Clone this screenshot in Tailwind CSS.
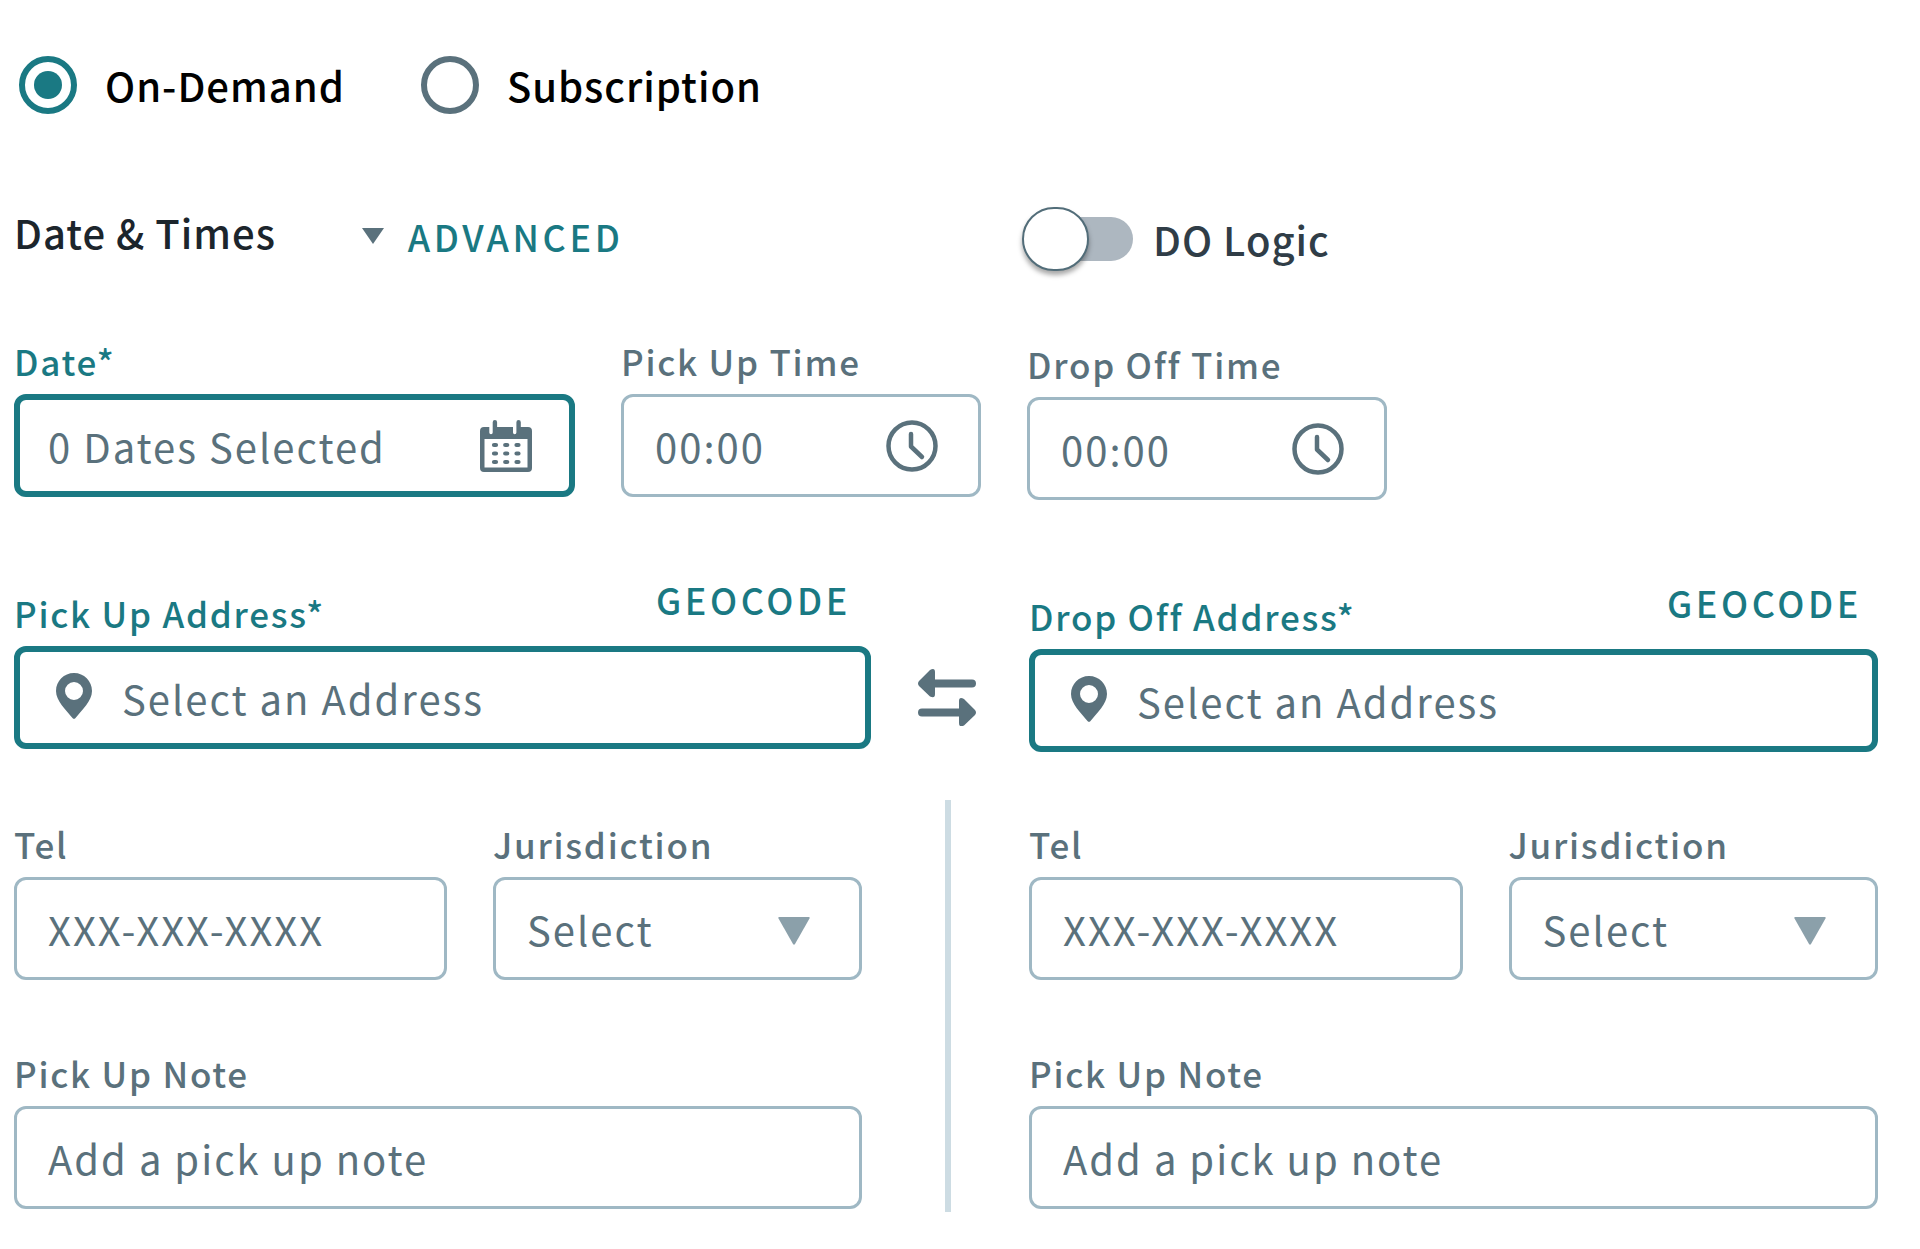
<!DOCTYPE html>
<html lang="en">
<head>
    <meta charset="UTF-8">
    <meta name="viewport" content="width=device-width, initial-scale=1.0">
    <title>Trip Booking</title>
    <script src="https://cdn.jsdelivr.net/npm/@tailwindcss/browser@4"></script>
</head>
<body class="bg-white min-h-screen font-['Noto_Sans_CJK_SC',sans-serif] text-[#5a717c]">
    <form class="pl-[14px] pr-[42px] pt-14 pb-9">

        <!-- Trip type -->
        <div class="flex items-center gap-19 pl-[5px] text-black text-[40px] leading-[56px] font-medium tracking-wide">
            <label class="flex items-center gap-7">
                <input type="radio" name="tripType" checked class="appearance-none size-[58px] rounded-full border-6 border-[#5a717c] checked:border-[#1a7983] grid place-items-center before:size-[28px] before:rounded-full checked:before:bg-[#1a7983]">
                On-Demand
            </label>
            <label class="flex items-center gap-7">
                <input type="radio" name="tripType" class="appearance-none size-[58px] rounded-full border-6 border-[#5a717c] checked:border-[#1a7983] grid place-items-center before:size-[28px] before:rounded-full checked:before:bg-[#1a7983]">
                Subscription
            </label>
        </div>

        <!-- Section header -->
        <div class="mt-[90px] grid grid-cols-[1008fr_856fr] items-start">
            <div class="flex items-start leading-[56px]">
                <h2 class="text-[40px] font-medium tracking-wide text-[#1c252c]">Date &amp; Times</h2>
                <button type="button" class="ml-[86px] pt-1 flex items-center gap-6 text-[36px] font-medium tracking-widest text-[#1a7983]">
                    <svg class="w-[22px] h-4 fill-[#5a717c]" viewBox="0 0 22 16"><path d="M0 0h22L11 16z"/></svg>
                    ADVANCED
                </button>
            </div>
            <label class="pt-[3px] flex items-center gap-5 text-[40px] leading-[56px] font-medium tracking-wide text-[#303d47]">
                <input type="checkbox" role="switch" class="appearance-none relative w-[111px] h-16 before:absolute before:inset-y-[10px] before:left-5 before:right-0 before:rounded-full before:bg-[#adb7c0] after:absolute after:left-0 after:top-0 after:w-[67px] after:h-16 after:rounded-full after:border-2 after:border-[#526d79] after:bg-white after:shadow-[0_4px_5px_rgba(0,0,0,0.35)] checked:after:left-[44px]">
                DO Logic
            </label>
        </div>

        <!-- Date and times -->
        <div class="mt-[66px] grid grid-cols-[561fr_360fr_360fr_445fr] gap-x-[46px] items-start">
            <div class="min-w-0 flex flex-col gap-[9px]">
                <label for="date" class="text-[35px] leading-[48px] font-medium tracking-wider text-[#1a7983]">Date*</label>
                <div class="h-[103px] flex items-center border-6 border-[#1a7983] rounded-xl pl-[28px] pr-[37px]">
                    <input id="date" type="text" placeholder="0 Dates Selected" class="flex-1 min-w-0 h-full text-[40px] tracking-wider outline-none placeholder:text-[#5a717c]">
                    <svg class="w-[52px] h-[52px] shrink-0" viewBox="0 0 52 52">
                        <path fill="#5a717c" fill-rule="evenodd" d="M4 7H9.300V12.500a1.700 1.700 0 0 0 3.400 0V2.200a2.200 2.200 0 0 1 4.400 0V7H33V12.500a1.700 1.700 0 0 0 3.400 0V2.200a2.200 2.200 0 0 1 4.400 0V7H48a4 4 0 0 1 4 4V48a4 4 0 0 1-4 4H4a4 4 0 0 1-4-4V11a4 4 0 0 1 4-4zM4.500 19V47.500H47.500V19z"/>
                        <path stroke="#5a717c" stroke-width="4.200" stroke-linecap="round" d="M14 25h2M25.200 25h2M36.500 25h2M14 33.500h2M25.200 33.500h2M36.500 33.500h2M14 42h2M25.200 42h2M36.500 42h2"/>
                    </svg>
                </div>
            </div>
            <div class="min-w-0 flex flex-col gap-[9px]">
                <label for="pickUpTime" class="text-[35px] leading-[48px] font-medium tracking-wider">Pick Up Time</label>
                <div class="h-[103px] flex items-center border-3 border-[#9fb8c4] rounded-xl pl-[31px] pr-[40px]">
                    <input id="pickUpTime" type="text" placeholder="00:00" class="flex-1 min-w-0 h-full text-[40px] tracking-wider outline-none placeholder:text-[#5a717c]">
                    <svg class="w-[52px] h-[52px] shrink-0" viewBox="0 0 52 52" fill="none" stroke="#5a717c" stroke-linecap="round" stroke-linejoin="round">
                        <circle cx="26" cy="26" r="23.500" stroke-width="4.500"/>
                        <path stroke-width="4.500" d="M25 14V26.500L36 37"/>
                    </svg>
                </div>
            </div>
            <div class="min-w-0 flex flex-col gap-[9px] pt-[3px]">
                <label for="dropOffTime" class="text-[35px] leading-[48px] font-medium tracking-wider">Drop Off Time</label>
                <div class="h-[103px] flex items-center border-3 border-[#9fb8c4] rounded-xl pl-[31px] pr-[40px]">
                    <input id="dropOffTime" type="text" placeholder="00:00" class="flex-1 min-w-0 h-full text-[40px] tracking-wider outline-none placeholder:text-[#5a717c]">
                    <svg class="w-[52px] h-[52px] shrink-0" viewBox="0 0 52 52" fill="none" stroke="#5a717c" stroke-linecap="round" stroke-linejoin="round">
                        <circle cx="26" cy="26" r="23.500" stroke-width="4.500"/>
                        <path stroke-width="4.500" d="M25 14V26.500L36 37"/>
                    </svg>
                </div>
            </div>
        </div>

        <!-- Addresses -->
        <div class="mt-[75px] grid grid-cols-[857fr_158fr_849fr] items-start">
            <div class="min-w-0 flex flex-col gap-[9px]">
                <div class="h-[62px] flex justify-between leading-[48px] font-medium text-[#1a7983]">
                    <label for="pickUpAddress" class="self-end text-[35px] tracking-wider">Pick Up Address*</label>
                    <button type="button" class="self-start mr-5 text-[36px] tracking-widest">GEOCODE</button>
                </div>
                <div class="h-[103px] flex items-center gap-[30px] border-6 border-[#1a7983] rounded-xl pl-9 pr-6">
                    <svg class="w-9 h-[46px] mb-1 shrink-0 fill-[#5a717c]" viewBox="0 0 36 46"><path fill-rule="evenodd" d="M18 0C28 0 36 8 36 18C36 28 26 37 19.500 45Q18 46.700 16.500 45C10 37 0 28 0 18C0 8 8 0 18 0zM18 9a9 9 0 1 0 0 18a9 9 0 1 0 0-18z"/></svg>
                    <input id="pickUpAddress" type="text" placeholder="Select an Address" class="flex-1 min-w-0 h-full text-[40px] tracking-wider outline-none placeholder:text-[#5a717c]">
                </div>
            </div>
            <button type="button" aria-label="Swap addresses" class="self-end justify-self-center pr-[6px] pb-[26px]">
                <svg class="w-[58px] h-[57px] fill-[#5a717c]" viewBox="0 0 58 57">
                    <path d="M1 12L12 1Q17-1.500 17 3V10.500H54a4 4 0 0 1 0 8H17V25Q17 30 12 27.500L1 17Q-1 14.500 1 12z"/>
                    <path d="M57 41L46 30Q41 27.500 41 32V39.500H4a4 4 0 0 0 0 8H41V54Q41 59 46 56.500L57 46Q59 43.500 57 41z"/>
                </svg>
            </button>
            <div class="min-w-0 flex flex-col gap-[9px] pt-[3px]">
                <div class="h-[62px] flex justify-between leading-[48px] font-medium text-[#1a7983]">
                    <label for="dropOffAddress" class="self-end text-[35px] tracking-wider">Drop Off Address*</label>
                    <button type="button" class="self-start mr-4 text-[36px] tracking-widest">GEOCODE</button>
                </div>
                <div class="h-[103px] flex items-center gap-[30px] border-6 border-[#1a7983] rounded-xl pl-9 pr-6">
                    <svg class="w-9 h-[46px] mb-1 shrink-0 fill-[#5a717c]" viewBox="0 0 36 46"><path fill-rule="evenodd" d="M18 0C28 0 36 8 36 18C36 28 26 37 19.500 45Q18 46.700 16.500 45C10 37 0 28 0 18C0 8 8 0 18 0zM18 9a9 9 0 1 0 0 18a9 9 0 1 0 0-18z"/></svg>
                    <input id="dropOffAddress" type="text" placeholder="Select an Address" class="flex-1 min-w-0 h-full text-[40px] tracking-wider outline-none placeholder:text-[#5a717c]">
                </div>
            </div>
        </div>

        <!-- Contact details and notes -->
        <div class="mt-12 grid grid-cols-[848fr_167fr_849fr]">
            <div class="min-w-0 pt-5 pb-[3px] flex flex-col gap-[69px]">
                <div class="grid grid-cols-[433fr_369fr] gap-x-[46px]">
                    <div class="min-w-0 flex flex-col gap-[9px]">
                        <label for="pickUpTel" class="text-[35px] leading-[48px] font-medium tracking-wider">Tel</label>
                        <input id="pickUpTel" type="tel" placeholder="XXX-XXX-XXXX" class="w-full h-[103px] border-3 border-[#9fb8c4] rounded-xl px-[31px] text-[40px] tracking-wider placeholder:text-[#5a717c]">
                    </div>
                    <div class="min-w-0 flex flex-col gap-[9px]">
                        <label for="pickUpJurisdiction" class="text-[35px] leading-[48px] font-medium tracking-wider">Jurisdiction</label>
                        <div class="relative">
                            <select id="pickUpJurisdiction" class="appearance-none w-full h-[103px] border-3 border-[#9fb8c4] rounded-xl px-[31px] text-[40px] tracking-wider">
                                <option>Select</option>
                            </select>
                            <svg class="absolute right-[52px] top-10 w-8 h-7 pointer-events-none fill-[#8ba0aa]" viewBox="0 0 32 28"><path d="M1 0H31Q32 0 31.500 1.500L17 27Q16 28.500 15 27L.5 1.500Q0 0 1 0z"/></svg>
                        </div>
                    </div>
                </div>
                <div class="flex flex-col gap-[9px]">
                    <label for="pickUpNote" class="text-[35px] leading-[48px] font-medium tracking-wider">Pick Up Note</label>
                    <input id="pickUpNote" type="text" placeholder="Add a pick up note" class="w-full h-[103px] border-3 border-[#9fb8c4] rounded-xl px-[31px] text-[40px] tracking-wider placeholder:text-[#5a717c]">
                </div>
            </div>
            <div class="flex justify-center pl-1">
                <div class="w-[6px] bg-[#cddce3]"></div>
            </div>
            <div class="min-w-0 pt-5 pb-[3px] flex flex-col gap-[69px]">
                <div class="grid grid-cols-[433fr_369fr] gap-x-[46px]">
                    <div class="min-w-0 flex flex-col gap-[9px]">
                        <label for="dropOffTel" class="text-[35px] leading-[48px] font-medium tracking-wider">Tel</label>
                        <input id="dropOffTel" type="tel" placeholder="XXX-XXX-XXXX" class="w-full h-[103px] border-3 border-[#9fb8c4] rounded-xl px-[31px] text-[40px] tracking-wider placeholder:text-[#5a717c]">
                    </div>
                    <div class="min-w-0 flex flex-col gap-[9px]">
                        <label for="dropOffJurisdiction" class="text-[35px] leading-[48px] font-medium tracking-wider">Jurisdiction</label>
                        <div class="relative">
                            <select id="dropOffJurisdiction" class="appearance-none w-full h-[103px] border-3 border-[#9fb8c4] rounded-xl px-[31px] text-[40px] tracking-wider">
                                <option>Select</option>
                            </select>
                            <svg class="absolute right-[52px] top-10 w-8 h-7 pointer-events-none fill-[#8ba0aa]" viewBox="0 0 32 28"><path d="M1 0H31Q32 0 31.500 1.500L17 27Q16 28.500 15 27L.5 1.500Q0 0 1 0z"/></svg>
                        </div>
                    </div>
                </div>
                <div class="flex flex-col gap-[9px]">
                    <label for="dropOffNote" class="text-[35px] leading-[48px] font-medium tracking-wider">Pick Up Note</label>
                    <input id="dropOffNote" type="text" placeholder="Add a pick up note" class="w-full h-[103px] border-3 border-[#9fb8c4] rounded-xl px-[31px] text-[40px] tracking-wider placeholder:text-[#5a717c]">
                </div>
            </div>
        </div>
    </form>
</body>
</html>
